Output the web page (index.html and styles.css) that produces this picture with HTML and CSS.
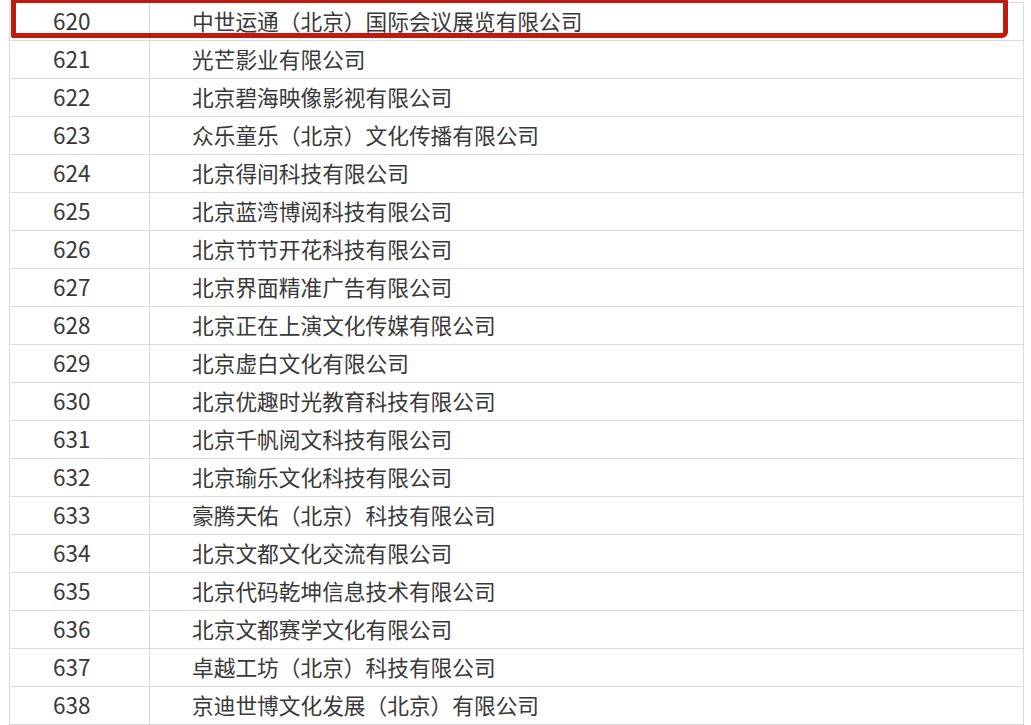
FILE: index.html
```html
<!DOCTYPE html>
<html lang="zh-CN">
<head>
<meta charset="utf-8">
<link rel="stylesheet" href="styles.css">
</head>
<body>
<div class="wrap">
<table class="list">
<tbody>
<tr><td class="num">620</td><td class="name">中世运通（北京）国际会议展览有限公司</td></tr>
<tr><td class="num">621</td><td class="name">光芒影业有限公司</td></tr>
<tr><td class="num">622</td><td class="name">北京碧海映像影视有限公司</td></tr>
<tr><td class="num">623</td><td class="name">众乐童乐（北京）文化传播有限公司</td></tr>
<tr><td class="num">624</td><td class="name">北京得间科技有限公司</td></tr>
<tr><td class="num">625</td><td class="name">北京蓝湾博阅科技有限公司</td></tr>
<tr><td class="num">626</td><td class="name">北京节节开花科技有限公司</td></tr>
<tr><td class="num">627</td><td class="name">北京界面精准广告有限公司</td></tr>
<tr><td class="num">628</td><td class="name">北京正在上演文化传媒有限公司</td></tr>
<tr><td class="num">629</td><td class="name">北京虚白文化有限公司</td></tr>
<tr><td class="num">630</td><td class="name">北京优趣时光教育科技有限公司</td></tr>
<tr><td class="num">631</td><td class="name">北京千帆阅文科技有限公司</td></tr>
<tr><td class="num">632</td><td class="name">北京瑜乐文化科技有限公司</td></tr>
<tr><td class="num">633</td><td class="name">豪腾天佑（北京）科技有限公司</td></tr>
<tr><td class="num">634</td><td class="name">北京文都文化交流有限公司</td></tr>
<tr><td class="num">635</td><td class="name">北京代码乾坤信息技术有限公司</td></tr>
<tr><td class="num">636</td><td class="name">北京文都赛学文化有限公司</td></tr>
<tr><td class="num">637</td><td class="name">卓越工坊（北京）科技有限公司</td></tr>
<tr><td class="num">638</td><td class="name">京迪世博文化发展（北京）有限公司</td></tr>
</tbody>
</table>
<div class="highlight"></div>
</div>
</body>
</html>
```

FILE: styles.css
```css
html, body {
  margin: 0;
  padding: 0;
  background: #ffffff;
  overflow: hidden;
}

.wrap {
  position: relative;
  padding: 2px 0 0 9px;
}

.list {
  border-collapse: collapse;
  width: 1015px;
  font-family: "Noto Sans CJK SC", "Noto Sans", sans-serif;
  font-size: 21.7px;
  color: #383838;
}

.list td {
  border: 1px solid #dadada;
  height: 35px;
  padding: 0 0 2px 0;
  line-height: 35px;
  vertical-align: middle;
  white-space: nowrap;
}

.num {
  width: 96px;
  padding-left: 43px !important;
  font-size: 22.5px;
}

.name {
  padding-left: 42px !important;
}

.highlight {
  position: absolute;
  left: 11px;
  top: -2px;
  width: 987px;
  height: 30px;
  border: 5px solid #c01a0f;
  border-radius: 2px 4px 6px 2px;
}
```
